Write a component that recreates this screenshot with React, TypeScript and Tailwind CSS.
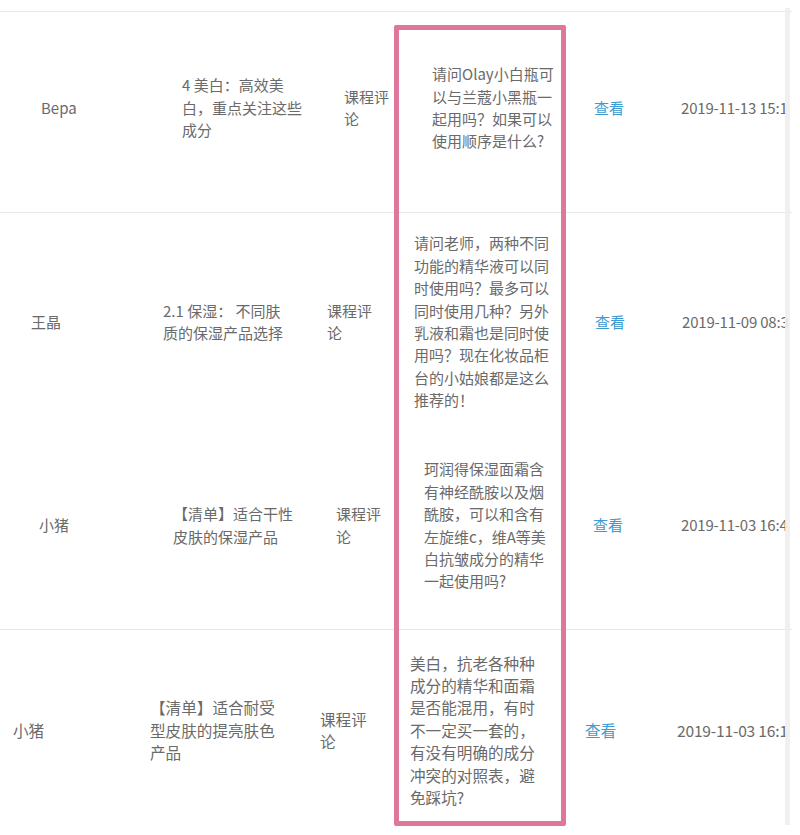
import React from "react";

type Row = {
    name: string;
    course: string[];
    question: string[];
    date: string;
};

const rows: Row[] = [
    {
        name: "Bepa",
        course: ["4 美白：高效美", "白，重点关注这些", "成分"],
        question: ["请问Olay小白瓶可", "以与兰蔻小黑瓶一", "起用吗？如果可以", "使用顺序是什么?"],
        date: "2019-11-13 15:1",
    },
    {
        name: "王晶",
        course: ["2.1 保湿： 不同肤", "质的保湿产品选择"],
        question: [
            "请问老师，两种不同",
            "功能的精华液可以同",
            "时使用吗？最多可以",
            "同时使用几种？另外",
            "乳液和霜也是同时使",
            "用吗？现在化妆品柜",
            "台的小姑娘都是这么",
            "推荐的！",
        ],
        date: "2019-11-09 08:3",
    },
    {
        name: "小猪",
        course: ["【清单】适合干性", "皮肤的保湿产品"],
        question: [
            "珂润得保湿面霜含",
            "有神经酰胺以及烟",
            "酰胺，可以和含有",
            "左旋维c，维A等美",
            "白抗皱成分的精华",
            "一起使用吗?",
        ],
        date: "2019-11-03 16:4",
    },
    {
        name: "小猪",
        course: ["【清单】适合耐受", "型皮肤的提亮肤色", "产品"],
        question: [
            "美白，抗老各种种",
            "成分的精华和面霜",
            "是否能混用，有时",
            "不一定买一套的，",
            "有没有明确的成分",
            "冲突的对照表，避",
            "免踩坑?",
        ],
        date: "2019-11-03 16:1",
    },
];

// each strip of the stitched screenshot sits at its own horizontal offset
const rowStyles = [
    "h-[202px] border-y border-[#e8e8e8] pb-[8px] pl-[41px] grid-cols-[141px_162px_88px_162px_87px_1fr] text-[15px]",
    "h-[218px] pl-[31px] grid-cols-[132px_164px_87px_181px_87px_1fr] text-[15px]",
    "h-[199px] border-b border-[#e8e8e8] pb-[9px] pl-[39px] grid-cols-[134px_163px_88px_169px_88px_1fr] text-[15px]",
    "h-[200px] pl-[13px] grid-cols-[137px_170px_90px_175px_92px_1fr] text-[15.6px]",
];

function Lines({ lines }: { lines: string[] }) {
    return (
        <div className="whitespace-nowrap">
            {lines.map((l, i) => (
                <div key={i}>{l}</div>
            ))}
        </div>
    );
}

export default function App() {
    return (
        <div className="relative w-[800px] h-[835px] overflow-hidden bg-white font-['Noto_Sans_CJK_SC','Noto_Sans',sans-serif] text-[#6a6a6a] leading-[22.4px]">
            <div className="w-[792px] pt-[11px]">
                {rows.map((r, i) => (
                    <div key={i} className={`grid items-center ${rowStyles[i]}`}>
                        <div className="whitespace-nowrap">{r.name}</div>
                        <Lines lines={r.course} />
                        <Lines lines={["课程评", "论"]} />
                        <Lines lines={r.question} />
                        <div className="text-[#3d9bd1]">查看</div>
                        <div className="whitespace-nowrap tracking-[-0.2px]">{r.date}</div>
                    </div>
                ))}
            </div>

            {/* scroll shadow on the right edge */}
            <div className="absolute left-[785px] top-[8px] w-[5px] h-[817px] bg-[#eeeeee]/90" />

            {/* highlight drawn over the question column */}
            <div className="absolute left-[394px] top-[25px] w-[172px] h-[801px] border-[5px] border-[#df769b] rounded-[2px]" />
        </div>
    );
}
